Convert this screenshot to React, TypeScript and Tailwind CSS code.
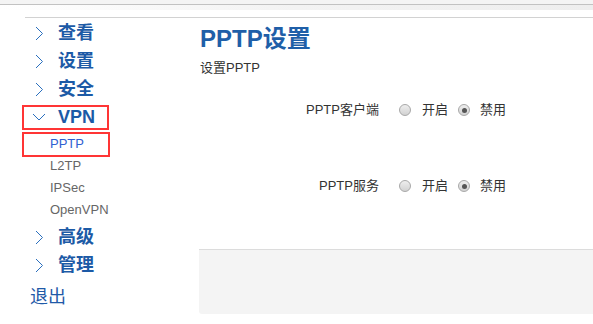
import React from 'react'

const FONT = "font-['Liberation_Sans','Noto_Sans_CJK_SC',sans-serif]"

function ChevronRight() {
  return (
    <svg width="9" height="15" viewBox="0 0 9 15" className="block">
      <polyline points="1,1 7.5,7.5 1,14" fill="none" stroke="#2a6fbe" strokeWidth="1" />
    </svg>
  )
}

function ChevronDown() {
  return (
    <svg width="14" height="8" viewBox="0 0 14 8" className="block">
      <polyline points="1,1 7,7 13,1" fill="none" stroke="#2a6fbe" strokeWidth="1" />
    </svg>
  )
}

function NavItem({ label, open = false }: { label: string; open?: boolean }) {
  return (
    <div className="flex h-[28px] items-center">
      <span className={open ? 'w-[33px] pl-[7px]' : 'w-[33px] pl-[10px]'}>
        {open ? <ChevronDown /> : <ChevronRight />}
      </span>
      <span className="text-[18px] font-bold leading-none text-[#1c5aa6]">{label}</span>
    </div>
  )
}

function SubItem({ label, active = false }: { label: string; active?: boolean }) {
  return (
    <div
      className={`flex h-[22px] items-center pl-[25px] text-[13px] ${
        active ? 'text-[#2f60d2]' : 'text-[#666]'
      }`}
    >
      {label}
    </div>
  )
}

function Radio({ checked }: { checked?: boolean }) {
  return (
    <span className="flex h-[12px] w-[12px] items-center justify-center rounded-full border border-[#a8a8a8] bg-gradient-to-b from-[#eeeeee] to-[#d2d2d2]">
      {checked && <span className="h-[5px] w-[5px] rounded-full bg-[#555]" />}
    </span>
  )
}

function SwitchRow({ label }: { label: string }) {
  return (
    <div className="flex h-[24px] items-center text-[13px] text-[#333]">
      <span className="w-[180px] text-right">{label}</span>
      <span className="ml-[20px]">
        <Radio />
      </span>
      <span className="ml-[11px]">开启</span>
      <span className="ml-[10px]">
        <Radio checked />
      </span>
      <span className="ml-[10px]">禁用</span>
    </div>
  )
}

export default function App() {
  return (
    <div className={`h-[324px] w-[593px] overflow-hidden bg-white ${FONT}`}>
      <div className="h-[4px] bg-[#f4f4f4]" />
      <div className="h-[1px] bg-[#c2c2c2]" />
      <div className="h-[5px] bg-gradient-to-r from-white via-[#f3f3f3] to-[#eeeeee]" />
      <div className="h-[7px]" />

      <div className="ml-[25px] flex border-t border-[#d2d2d2]">
        <aside className="relative w-[174px] pt-[1px]">
          <NavItem label="查看" />
          <NavItem label="设置" />
          <NavItem label="安全" />
          <NavItem label="VPN" open />
          <div className="mb-[2px] mt-[2px]">
            <SubItem label="PPTP" active />
            <SubItem label="L2TP" />
            <SubItem label="IPSec" />
            <SubItem label="OpenVPN" />
          </div>
          <NavItem label="高级" />
          <NavItem label="管理" />
          <div className="mt-[4px] flex h-[28px] items-center pl-[5px] text-[18px] text-[#1f5aa8]">
            退出
          </div>

          <div className="absolute left-[-3px] top-[87px] h-[25px] w-[87px] border-2 border-[#ff3535]" />
          <div className="absolute left-[-3px] top-[114px] h-[25px] w-[88px] border-2 border-[#ff3535]" />
        </aside>

        <main className="flex-1 pt-[6px]">
          <h1 className="pl-[1px] text-[24px] font-bold leading-[30px] text-[#1f5fa8]">PPTP设置</h1>
          <p className="mt-[5px] pl-[1px] text-[13px] leading-[18px] text-[#333]">设置PPTP</p>

          <div className="mt-[21px]">
            <SwitchRow label="PPTP客户端" />
            <div className="mt-[52px]">
              <SwitchRow label="PPTP服务" />
            </div>
          </div>

          <div className="mt-[51px] h-[65px] rounded-bl-[3px] border-t border-[#dcdcdc] bg-[#f4f4f4]" />
        </main>
      </div>
    </div>
  )
}
